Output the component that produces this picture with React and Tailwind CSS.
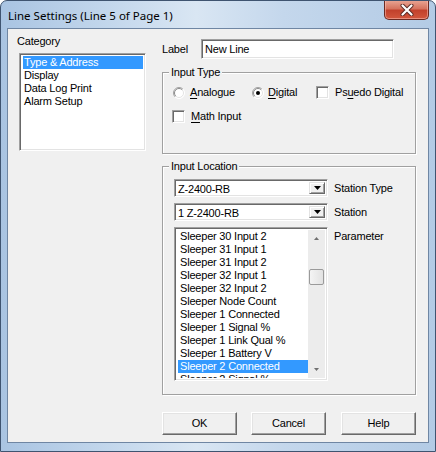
import React from "react";

const F = { fontFamily: '"Liberation Sans", Arial, sans-serif' };

function Radio({ checked }) {
  return (
    <svg width="12" height="12" viewBox="0 0 12 12" className="shrink-0">
      <circle cx="6" cy="6" r="5.5" fill="#fff" />
      <path d="M2.1 9.9 A5.5 5.5 0 0 1 9.9 2.1" stroke="#a0a0a0" fill="none" />
      <path d="M9.9 2.1 A5.5 5.5 0 0 1 2.1 9.9" stroke="#ffffff" fill="none" />
      <path d="M2.8 9.2 A4.5 4.5 0 0 1 9.2 2.8" stroke="#8a8a8a" fill="none" />
      <path d="M9.2 2.8 A4.5 4.5 0 0 1 2.8 9.2" stroke="#e3e3e3" fill="none" />
      {checked && <circle cx="6" cy="6" r="2" fill="#000" />}
    </svg>
  );
}

function Check() {
  return (
    <div className="w-[13px] h-[13px] shrink-0 border border-t-[#a0a0a0] border-l-[#a0a0a0] border-r-white border-b-white shadow-[inset_1px_1px_0_#696969,inset_-1px_-1px_0_#e3e3e3] bg-white" />
  );
}

const sunken =
  "border border-t-[#a0a0a0] border-l-[#a0a0a0] border-r-white border-b-white shadow-[inset_1px_1px_0_#696969,inset_-1px_-1px_0_#e3e3e3] bg-white";

function Combo({ value }) {
  return (
    <div className={`w-[154px] h-[18px] flex items-stretch p-[2px] ${sunken}`}>
      <div className="flex-1 pl-[1px] text-[11px] leading-[14px] text-black">{value}</div>
      <div className="w-[16px] flex items-center justify-center bg-[#f0f0f0] border border-t-[#e3e3e3] border-l-[#e3e3e3] border-r-[#696969] border-b-[#696969] shadow-[inset_1px_1px_0_#fff,inset_-1px_-1px_0_#a0a0a0]">
        <svg width="7" height="4" viewBox="0 0 7 4">
          <path d="M0 0 H7 L3.5 4 Z" fill="#000" />
        </svg>
      </div>
    </div>
  );
}

function Group({ title, className, children }) {
  return (
    <div
      className={`relative border border-[#a0a0a0] shadow-[inset_1px_1px_0_#fff,1px_1px_0_#fff] ${className}`}
    >
      <span className="absolute -top-[7px] left-[6px] px-[2px] bg-[#f0f0f0] text-[11px] leading-[13px] text-black">
        {title}
      </span>
      {children}
    </div>
  );
}

function Btn({ children, className = "" }) {
  return (
    <div
      className={`w-[75px] h-[23px] flex items-center justify-center text-[11px] text-black bg-[#f0f0f0] border border-t-white border-l-white border-r-[#696969] border-b-[#696969] shadow-[inset_-1px_-1px_0_#a0a0a0,inset_1px_1px_0_#e3e3e3] ${className}`}
    >
      {children}
    </div>
  );
}

const params = [
  "Sleeper 30 Input 2",
  "Sleeper 31 Input 1",
  "Sleeper 31 Input 2",
  "Sleeper 32 Input 1",
  "Sleeper 32 Input 2",
  "Sleeper Node Count",
  "Sleeper 1 Connected",
  "Sleeper 1 Signal %",
  "Sleeper 1 Link Qual %",
  "Sleeper 1 Battery V",
  "Sleeper 2 Connected",
  "Sleeper 2 Signal %",
];

export default function App() {
  return (
    <div
      className="w-[436px] h-[452px] flex flex-col rounded-t-[7px] border border-[#3f5470] bg-[linear-gradient(90deg,#a9c4e2_0%,#c3d7ec_25%,#d9e6f3_45%,#c4d7ec_65%,#b3cbe5_100%)] overflow-hidden"
      style={F}
    >
      <div className="h-[27px] flex items-start justify-between shrink-0">
        <span
          className="pl-[7px] pt-[7px] text-[11.5px] leading-[16px] text-black"
          style={{ fontFamily: '"Noto Sans", "Open Sans", sans-serif' }}
        >
          Line Settings (Line 5 of Page 1)
        </span>
        <div className="mr-[6px] -mt-[1px] w-[45px] h-[20px] rounded-b-[5px] border border-[#6b2a22] border-t-0 bg-[linear-gradient(180deg,#eaa897_0%,#d6745f_45%,#c2412c_55%,#d2573d_100%)] flex items-center justify-center shadow-[inset_0_0_0_1px_rgba(255,200,190,0.5)]">
          <svg width="14" height="12" viewBox="0 0 14 12">
            <path d="M2.5 1.5 L11.5 10.5 M11.5 1.5 L2.5 10.5" stroke="#5a2a24" strokeWidth="4" strokeLinecap="round" />
            <path d="M2.5 1.5 L11.5 10.5 M11.5 1.5 L2.5 10.5" stroke="#ffffff" strokeWidth="2.2" strokeLinecap="round" />
          </svg>
        </div>
      </div>
      <div className="mx-[6px] mb-[8px] flex-1 border border-[#6f86a3] bg-[#f0f0f0] flex text-black text-[11px] tracking-[-0.2px]">
        {/* left column */}
        <div className="pl-[9px] pt-[6px] flex flex-col shrink-0">
          <span className="leading-[13px]">Category</span>
          <div className={`ml-[2px] mt-[5px] w-[127px] h-[98px] p-[2px] ${sunken}`}>
            {["Type & Address", "Display", "Data Log Print", "Alarm Setup"].map((t, i) => (
              <div
                key={t}
                className={`h-[13px] leading-[13px] ml-[1px] pl-[1px] ${
                  i === 0 ? "bg-[#3399ff] text-white" : ""
                }`}
              >
                {t}
              </div>
            ))}
          </div>
        </div>
        {/* right column */}
        <div className="ml-[16px] w-[254px] pt-[10px] flex flex-col">
          <div className="h-[20px] flex items-center">
            <span className="w-[39px]">Label</span>
            <div className={`w-[193px] h-[20px] px-[3px] flex items-center ${sunken}`}>New Line</div>
          </div>

          <Group title="Input Type" className="mt-[13px] h-[82px]">
            <div className="pt-[13px] pl-[10px] flex items-center h-[13px] box-content leading-[13px]">
              <div className="w-[79px] flex items-center">
                <Radio />
                <span className="ml-[5px]">
                  <span className="underline underline-offset-[2px]">A</span>nalogue
                </span>
              </div>
              <div className="w-[64px] flex items-center">
                <Radio checked />
                <span className="ml-[4px]">
                  <span className="underline underline-offset-[2px]">D</span>igital
                </span>
              </div>
              <div className="flex items-center">
                <Check />
                <span className="ml-[6px]">
                  Ps<span className="underline underline-offset-[2px]">u</span>edo Digital
                </span>
              </div>
            </div>
            <div className="mt-[11px] pl-[9px] flex items-center h-[13px] leading-[13px]">
              <Check />
              <span className="ml-[6px]">
                <span className="underline underline-offset-[2px]">M</span>ath Input
              </span>
            </div>
          </Group>

          <Group title="Input Location" className="mt-[12px] h-[229px]">
            <div className="pt-[12px] pl-[11px] flex flex-col">
              <div className="flex items-center">
                <Combo value="Z-2400-RB" />
                <span className="ml-[6px]">Station Type</span>
              </div>
              <div className="flex items-center mt-[6px]">
                <Combo value="1 Z-2400-RB" />
                <span className="ml-[6px]">Station</span>
              </div>
              <div className="flex items-start mt-[6px]">
                <div className={`w-[154px] h-[154px] p-[2px] flex overflow-hidden ${sunken}`}>
                  <div className="flex-1 overflow-hidden">
                    {params.map((t, i) => (
                      <div
                        key={i}
                        className={`h-[13px] leading-[13px] ml-[1px] pl-[2px] whitespace-nowrap ${
                          i === 10 ? "bg-[#3399ff] text-white" : ""
                        }`}
                      >
                        {t}
                      </div>
                    ))}
                  </div>
                  <div className="w-[17px] shrink-0 bg-[#ececec] flex flex-col items-center">
                    <div className="h-[17px] w-full flex items-center justify-center">
                      <svg width="5" height="3" viewBox="0 0 5 3">
                        <path d="M0 3 L2.5 0 L5 3 Z" fill="#707070" />
                      </svg>
                    </div>
                    <div className="mt-[22px] w-[15px] h-[16px] rounded-[2px] border border-[#9a9a9a] bg-[linear-gradient(90deg,#f4f4f4,#e2e2e2)]" />
                    <div className="flex-1" />
                    <div className="h-[17px] w-full flex items-center justify-center">
                      <svg width="5" height="3" viewBox="0 0 5 3">
                        <path d="M0 0 L5 0 L2.5 3 Z" fill="#707070" />
                      </svg>
                    </div>
                  </div>
                </div>
                <span className="ml-[6px] mt-[3px] leading-[13px]">Parameter</span>
              </div>
            </div>
          </Group>

          <div className="mt-[17px] flex">
            <Btn>OK</Btn>
            <Btn className="ml-[14px]">Cancel</Btn>
            <Btn className="ml-[15px]">Help</Btn>
          </div>
        </div>
      </div>
    </div>
  );
}
